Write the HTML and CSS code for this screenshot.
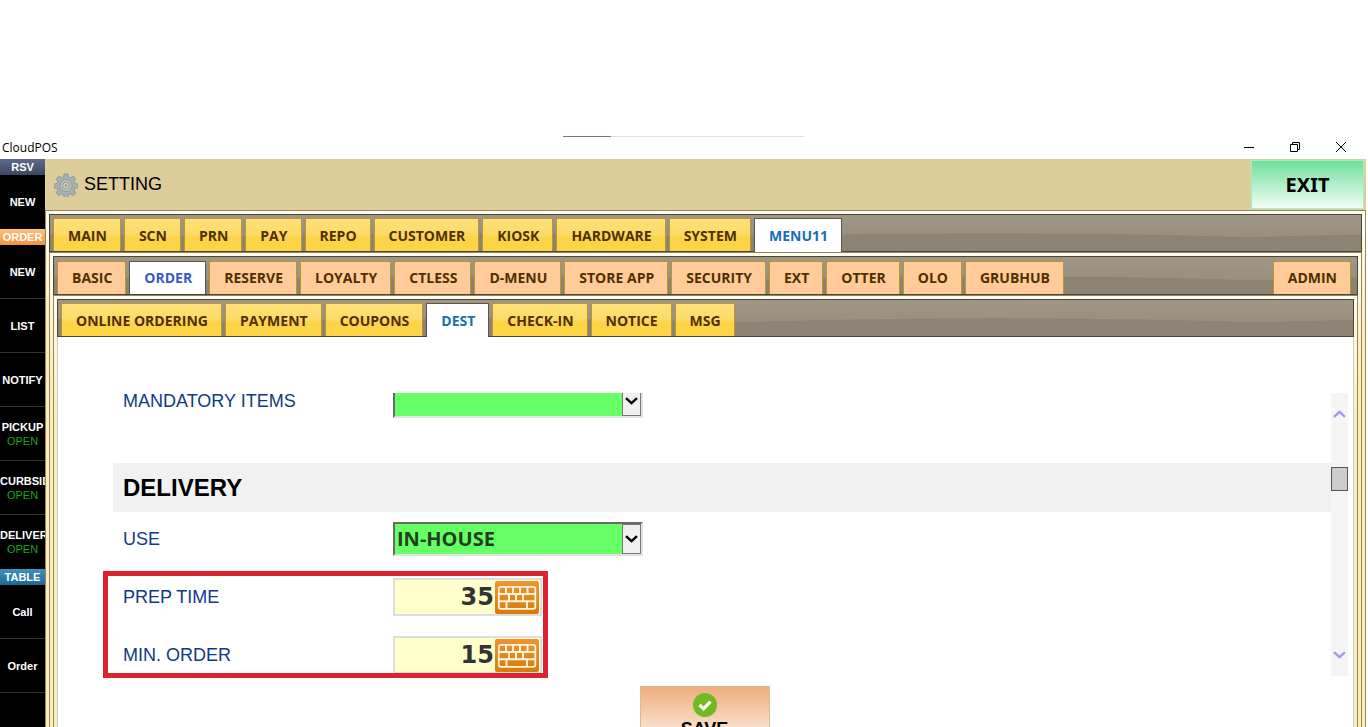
FILE: index.html
```html
<!DOCTYPE html>
<html lang="en">
<head>
<meta charset="utf-8">
<title>CloudPOS</title>
<link rel="stylesheet" href="styles.css">
</head>
<body>
<svg class="defs" aria-hidden="true">
  <symbol id="chevron" viewBox="0 0 13 8"><path d="M1 1.200L6.500 6.200L12 1.200" fill="none" stroke="currentColor" stroke-width="2.400"/></symbol>
  <symbol id="keyboard" viewBox="0 0 44 33">
    <rect x="3.800" y="5.800" width="36.500" height="22" rx="2" fill="none" stroke="#fff3d8" stroke-width="1.800"/>
    <path d="M4 13h36M4 20.300h36M11 6v7M18 6v7M25 6v7M32.500 6v7M14 13v7.300M21 13v7.300M28 13v7.300M11.500 20.300v7.500M32 20.300v7.500" stroke="#fff3d8" stroke-width="2"/>
  </symbol>
</svg>
<div class="loader"><div class="loader-value"></div></div>
<header class="titlebar">
  <span class="app-name">CloudPOS</span>
  <div class="window-controls">
    <button type="button" aria-label="Minimize"><svg width="12" height="12"><path d="M1 6.500h10" stroke="#000"/></svg></button>
    <button type="button" aria-label="Restore"><svg width="12" height="12" fill="none" stroke="#000"><path d="M1.500 3.500h7v7h-7zM3.500 3.500v-2h7v7h-2"/></svg></button>
    <button type="button" aria-label="Close"><svg width="12" height="12" stroke="#000"><path d="M1 1l10 10M11 1L1 11"/></svg></button>
  </div>
</header>
<div class="app">
  <nav class="sidebar">
    <h2 class="group rsv">RSV</h2>
    <button type="button" class="last">NEW</button>
    <h2 class="group order">ORDER</h2>
    <button type="button">NEW</button>
    <button type="button">LIST</button>
    <button type="button">NOTIFY</button>
    <button type="button">PICKUP<span class="open">OPEN</span></button>
    <button type="button">CURBSIDE<span class="open">OPEN</span></button>
    <button type="button" class="last">DELIVERY<span class="open">OPEN</span></button>
    <h2 class="group table">TABLE</h2>
    <button type="button">Call</button>
    <button type="button">Order</button>
  </nav>
  <main class="main">
    <div class="heading">
      <svg class="gear" viewBox="0 0 24 24">
        <g fill="#a6b0b0" stroke="#84949a" stroke-width=".8">
          <path d="M10 1h4l.6 3 2 .9 2.600-1.800 2.700 2.800-1.800 2.500.8 2 3 .6v3.800l-3 .6-.8 2 1.800 2.600-2.700 2.700-2.600-1.800-2 .9-.6 3h-4l-.6-3-2-.9-2.600 1.800L2.100 20l1.800-2.600-.8-2-3-.6V11l3-.6.8-2L2.100 5.900l2.700-2.800 2.600 1.800 2-.9z"/>
          <circle cx="12" cy="12.500" r="6" fill="#b9c1bd"/>
          <circle cx="12" cy="12.500" r="3.300" fill="#d9cfa8"/>
        </g>
        <circle cx="12" cy="12.500" r="1.300" fill="#8d9a9d"/>
      </svg>
      <h1>SETTING</h1>
      <button type="button" class="exit">EXIT</button>
    </div>
    <section class="panel">
      <div class="tabs gold">
        <button type="button">MAIN</button>
        <button type="button">SCN</button>
        <button type="button">PRN</button>
        <button type="button">PAY</button>
        <button type="button">REPO</button>
        <button type="button">CUSTOMER</button>
        <button type="button">KIOSK</button>
        <button type="button">HARDWARE</button>
        <button type="button">SYSTEM</button>
        <button type="button" class="active">MENU11</button>
      </div>
      <section class="panel">
        <div class="tabs peach">
          <button type="button">BASIC</button>
          <button type="button" class="active">ORDER</button>
          <button type="button">RESERVE</button>
          <button type="button">LOYALTY</button>
          <button type="button">CTLESS</button>
          <button type="button">D-MENU</button>
          <button type="button">STORE APP</button>
          <button type="button">SECURITY</button>
          <button type="button">EXT</button>
          <button type="button">OTTER</button>
          <button type="button">OLO</button>
          <button type="button">GRUBHUB</button>
          <button type="button" class="end">ADMIN</button>
        </div>
        <section class="panel">
          <div class="tabs gold">
            <button type="button">ONLINE ORDERING</button>
            <button type="button">PAYMENT</button>
            <button type="button">COUPONS</button>
            <button type="button" class="active">DEST</button>
            <button type="button">CHECK-IN</button>
            <button type="button">NOTICE</button>
            <button type="button">MSG</button>
          </div>
          <form class="content">
            <div class="scroller">
              <div class="fields">
                <div class="row first">
                  <label for="items">MANDATORY ITEMS</label>
                  <span class="picker"><select id="items"><option></option></select><span class="arrow"><svg><use href="#chevron"/></svg></span></span>
                </div>
                <h2 class="section-title">DELIVERY</h2>
                <div class="row">
                  <label for="use">USE</label>
                  <span class="picker"><select id="use"><option>IN-HOUSE</option></select><span class="arrow"><svg><use href="#chevron"/></svg></span></span>
                </div>
                <div class="row">
                  <label for="prep">PREP TIME</label>
                  <span class="number"><input id="prep" type="text" value="35"><button type="button" aria-label="Prep time keyboard"><svg><use href="#keyboard"/></svg></button></span>
                </div>
                <div class="row">
                  <label for="min">MIN. ORDER</label>
                  <span class="number"><input id="min" type="text" value="15"><button type="button" aria-label="Minimum order keyboard"><svg><use href="#keyboard"/></svg></button></span>
                </div>
              </div>
              <div class="scrollbar">
                <button type="button" class="up" aria-label="Scroll up"><svg><use href="#chevron"/></svg></button>
                <div class="thumb"></div>
                <button type="button" class="down" aria-label="Scroll down"><svg><use href="#chevron"/></svg></button>
              </div>
            </div>
            <div class="callout"></div>
            <button type="button" class="save">
              <svg viewBox="0 0 24 24"><circle cx="12" cy="12" r="12" fill="#72b922"/><path d="M6.500 12l4 3.700 7-7" fill="none" stroke="#fff" stroke-width="3.200"/></svg>
              SAVE
            </button>
          </form>
        </section>
      </section>
    </section>
  </main>
</div>
</body>
</html>
```
FILE: styles.css
```css
* { box-sizing: border-box; }
body {
  margin: 0;
  height: 100vh;
  overflow: hidden;
  display: flex;
  flex-direction: column;
  padding: 136px 2px 0 0;
  background: #fff;
  font-family: "Liberation Sans", Arial, sans-serif;
}
h1, h2 { margin: 0; }
button { margin: 0; border: 0; padding: 0; background: none; font: inherit; color: inherit; }
svg { display: block; }
.defs { position: absolute; width: 0; height: 0; }

.loader { flex: none; align-self: center; width: 241px; height: 1px; background: #dfdfe3; }
.loader-value { width: 20%; height: 1px; background: #6e6ec0; }

.titlebar {
  flex: none;
  height: 22px;
  display: flex;
  align-items: center;
  justify-content: space-between;
  padding: 0 19px 0 2px;
}
.app-name { font: 12px/20px "Open Sans", sans-serif; }
.window-controls { display: flex; gap: 34px; padding-bottom: 2px; }

.app { flex: 1; display: flex; min-height: 0; }

.sidebar {
  flex: none;
  width: 45px;
  overflow: hidden;
  background: #000;
  color: #fff;
  font: bold 11px/14px "Liberation Sans", Arial, sans-serif;
}
.group { font: bold 11px/16px "Liberation Sans", Arial, sans-serif; text-align: center; }
.rsv { background: linear-gradient(#5d6a8a, #3d4763); }
.order { background: linear-gradient(#ffc07a, #f4933c); }
.table { background: linear-gradient(#3d93bf, #1f6796); }
.sidebar button {
  width: 100%;
  height: 54px;
  display: flex;
  flex-direction: column;
  align-items: safe center;
  justify-content: center;
  border-bottom: 1px solid #333;
}
.sidebar button.last { border-bottom-color: #000; }
.sidebar .open { align-self: center; font-weight: normal; color: #1aa51a; }

.main { flex: 1; min-width: 0; display: flex; flex-direction: column; }
.heading {
  flex: none;
  height: 51px;
  display: flex;
  align-items: center;
  gap: 6px;
  padding: 0 2px 0 9px;
  background: #ddcd9b;
}
.gear { width: 24px; height: 24px; }
.heading h1 { font-size: 18px; font-weight: normal; }
.exit {
  width: 113px;
  height: 49px;
  margin-left: auto;
  border: 1px solid #a4efbd;
  background: linear-gradient(#6fdf9c, #f3fdf6);
  font: bold 20px/46px "Noto Sans", sans-serif;
}

.panel {
  flex: 1;
  min-height: 0;
  display: flex;
  flex-direction: column;
  padding: 3px 3px 0;
  border: 1px solid #94855c;
  border-bottom: 0;
  background: linear-gradient(#fffdf0, #fbecbc 120px);
}
.tabs {
  flex: none;
  height: 38px;
  display: flex;
  align-items: flex-end;
  gap: 3px;
  padding: 0 3px;
  border: 1px solid #4a4539;
  background:
    radial-gradient(ellipse 420px 18px at 50% 100%, #8c8372 96%, transparent) 160px 0 / 520px 100%,
    linear-gradient(#9f9686, #979080 62%, #8c8372 64%, #8a8170);
  font: bold 14px/34px "Open Sans", sans-serif;
  color: #4f3000;
}
.tabs.peach { height: 39px; line-height: 32px; }
.tabs button {
  height: 33px;
  padding: 0 13px 0 14px;
  border: 1px solid #bc9532;
  border-bottom: 0;
}
.gold button { background: linear-gradient(#fee07a, #fbdb65 50%, #fdd44a 55%, #fdd443); }
.peach button { background: #ffcb98; }
.tabs .active { border-color: #5b564a; background: #fff; color: #1a6eb5; }
.gold .active { height: 34px; margin-bottom: -1px; }
.peach .active { color: #3a57ce; }
.tabs .end { margin-left: auto; margin-right: 3px; }

.content {
  position: relative;
  flex: 1;
  min-height: 0;
  display: flex;
  flex-direction: column;
  align-items: center;
  gap: 10px;
  padding: 56px 5px 0 55px;
  border-left: 1px solid #ccc;
  border-right: 1px solid #ccc;
  background: #fff;
}
.tabs + .content { z-index: 0; }
.scroller { flex: none; align-self: stretch; height: 283px; display: flex; overflow: hidden; }
.fields { flex: 1; }
.row {
  height: 58px;
  display: grid;
  grid-template-columns: 270px auto;
  justify-content: start;
  align-items: center;
  padding-left: 10px;
}
.row.first { height: 54px; margin-top: -19px; margin-bottom: 35px; }
.row label { font-size: 18px; color: #0f3a86; }
.section-title { padding: 0 10px; background: #f1f1f1; font-size: 24px; line-height: 49px; margin-bottom: -2px; }

.picker {
  width: 250px;
  height: 34px;
  display: flex;
  border: 2px solid #e2e2e2;
  border-top-color: #6a6a6a;
  border-left-color: #6a6a6a;
  background: #66ff66;
}
.picker select {
  flex: 1;
  appearance: none;
  border: 0;
  padding: 0 2px;
  background: none;
  font: bold 20px/30px "Open Sans", sans-serif;
  color: #20401c;
}
.arrow {
  width: 19px;
  display: grid;
  place-items: center;
  border: 1px solid #777;
  background: #f0f0f0;
}
.arrow svg { width: 13px; height: 8px; }

.number {
  width: 149px;
  height: 38px;
  display: flex;
  align-items: center;
  border: 2px solid #ddd;
  background: #ffffcc;
}
.number input {
  flex: 1;
  min-width: 0;
  border: 0;
  padding: 0 1px 0 0;
  background: none;
  text-align: right;
  font: bold 24px "DejaVu Sans", sans-serif;
  color: #333;
}
.number button { margin-right: 1px; border-radius: 2px; background: linear-gradient(#ee9433, #d47d0d); }
.number svg { width: 44px; height: 33px; }

.scrollbar {
  width: 17px;
  display: flex;
  flex-direction: column;
  align-items: center;
  padding: 17px 0;
  background: #f5f5f5;
  color: #9d9aec;
}
.scrollbar svg { width: 13px; height: 8px; }
.scrollbar .up svg { transform: rotate(180deg); }
.thumb { width: 17px; height: 24px; margin-top: 49px; border: 1px solid #555; background: #cdcdcd; }
.scrollbar .down { margin-top: auto; }

.callout {
  position: absolute;
  left: 45px;
  top: 234px;
  width: 445px;
  height: 107px;
  border: 5px solid #dc2430;
}

.save {
  flex: none;
  width: 130px;
  height: 70px;
  margin-right: 52px;
  display: flex;
  flex-direction: column;
  align-items: center;
  padding-top: 6px;
  border: 1px solid #d3bf91;
  background: linear-gradient(#f0ad7c, #ffffff);
  font-size: 18px;
  font-weight: bold;
  line-height: 24px;
}
.save svg { width: 24px; height: 24px; }
```
